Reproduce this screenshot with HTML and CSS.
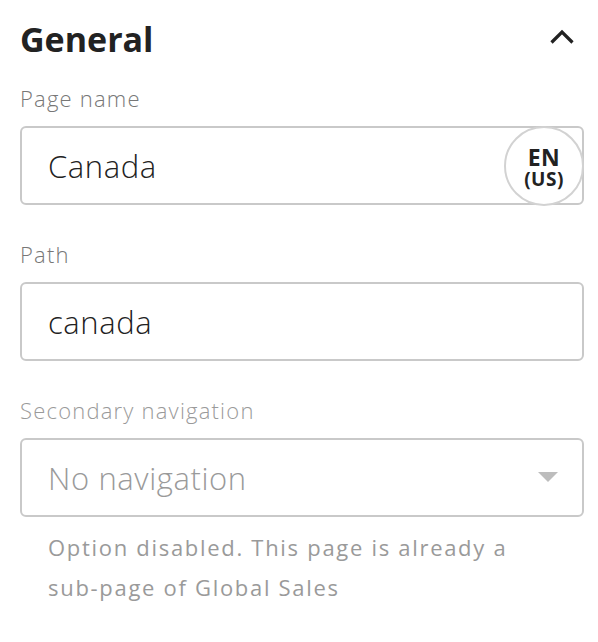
FILE: index.html
```html
<!DOCTYPE html>
<html lang="en">
<head>
  <meta charset="UTF-8">
  <meta name="viewport" content="width=device-width, initial-scale=1">
  <title>Page settings</title>
  <link rel="stylesheet" href="styles.css">
</head>
<body>
  <section class="panel">
    <div class="panel-header">
      <h1>General</h1>
      <button class="collapse" aria-label="Collapse section">
        <svg width="26" height="16" viewBox="0 0 26 16">
          <path d="M2.5 13.5 L13 3 L23.5 13.5" fill="none" stroke="#222" stroke-width="3.2"/>
        </svg>
      </button>
    </div>

    <div class="field">
      <label for="page-name">Page name</label>
      <div class="input-wrap">
        <input type="text" id="page-name" value="Canada">
        <span class="locale"><span>EN</span><small>(US)</small></span>
      </div>
    </div>

    <div class="field">
      <label for="path">Path</label>
      <div class="input-wrap">
        <input type="text" id="path" value="canada">
      </div>
    </div>

    <div class="field disabled">
      <label for="secondary-nav">Secondary navigation</label>
      <div class="select-wrap">
        <select id="secondary-nav" disabled>
          <option>No navigation</option>
        </select>
      </div>
      <p class="hint">Option disabled. This page is already a <span class="nowrap">sub-page</span> of Global Sales</p>
    </div>
  </section>
</body>
</html>
```

FILE: styles.css
```css
:root {
  --text-base: #222222;
  --text-label: #777777;
  --text-muted: #9a9a9a;
  --border: #c9c9c9;
  --font-sans: 'Open Sans', 'Liberation Sans', sans-serif;
}
body {
  margin: 0;
  background: #ffffff;
  font-family: var(--font-sans);
  color: var(--text-base);
}
.panel {
  padding: 14px 14px 0 20px;
}
.panel-header {
  display: flex;
  justify-content: space-between;
  align-items: center;
  height: 50px;
}
h1 {
  margin: 0;
  font-size: 34px;
  font-weight: 700;
}
.collapse {
  background: none;
  border: none;
  padding: 0;
  margin-right: 9px;
  margin-top: -4px;
  cursor: pointer;
  display: flex;
}

.field {
  margin-top: 19px;
}
.field + .field {
  margin-top: 34px;
}
.field label {
  display: block;
  font-size: 22px;
  font-weight: 300;
  line-height: 30px;
  letter-spacing: 1.2px;
  color: var(--text-label);
  margin-bottom: 13px;
}
.input-wrap,
.select-wrap {
  position: relative;
}
input[type="text"],
select {
  display: block;
  width: 100%;
  height: 79px;
  box-sizing: border-box;
  padding: 0 26px;
  border: 2px solid var(--border);
  border-radius: 6px;
  background: #fff;
  font-family: var(--font-sans);
  font-size: 31px;
  font-weight: 300;
  letter-spacing: 0.6px;
  color: var(--text-base);
  outline: none;
}
.locale {
  position: absolute;
  top: 0;
  right: 0;
  width: 80px;
  height: 80px;
  box-sizing: border-box;
  padding-top: 4px;
  border: 2px solid #d2d2d2;
  border-radius: 50%;
  background: #fff;
  display: flex;
  flex-direction: column;
  align-items: center;
  justify-content: center;
  font-weight: 700;
  letter-spacing: 0.5px;
}
.locale span {
  font-size: 23px;
  line-height: 22px;
}
.locale small {
  font-size: 19px;
  line-height: 22px;
}

.field.disabled label {
  color: var(--text-muted);
}
select {
  appearance: none;
  -webkit-appearance: none;
  color: var(--text-muted);
  opacity: 1;
}
.select-wrap::after {
  content: "";
  position: absolute;
  right: 26px;
  top: 34px;
  border-left: 10px solid transparent;
  border-right: 10px solid transparent;
  border-top: 10px solid #bdbdbd;
}
.hint {
  margin: 10px 0 0;
  padding-left: 28px;
  font-size: 22px;
  line-height: 40px;
  letter-spacing: 1.7px;
  color: var(--text-muted);
}
.nowrap {
  white-space: nowrap;
}
```
